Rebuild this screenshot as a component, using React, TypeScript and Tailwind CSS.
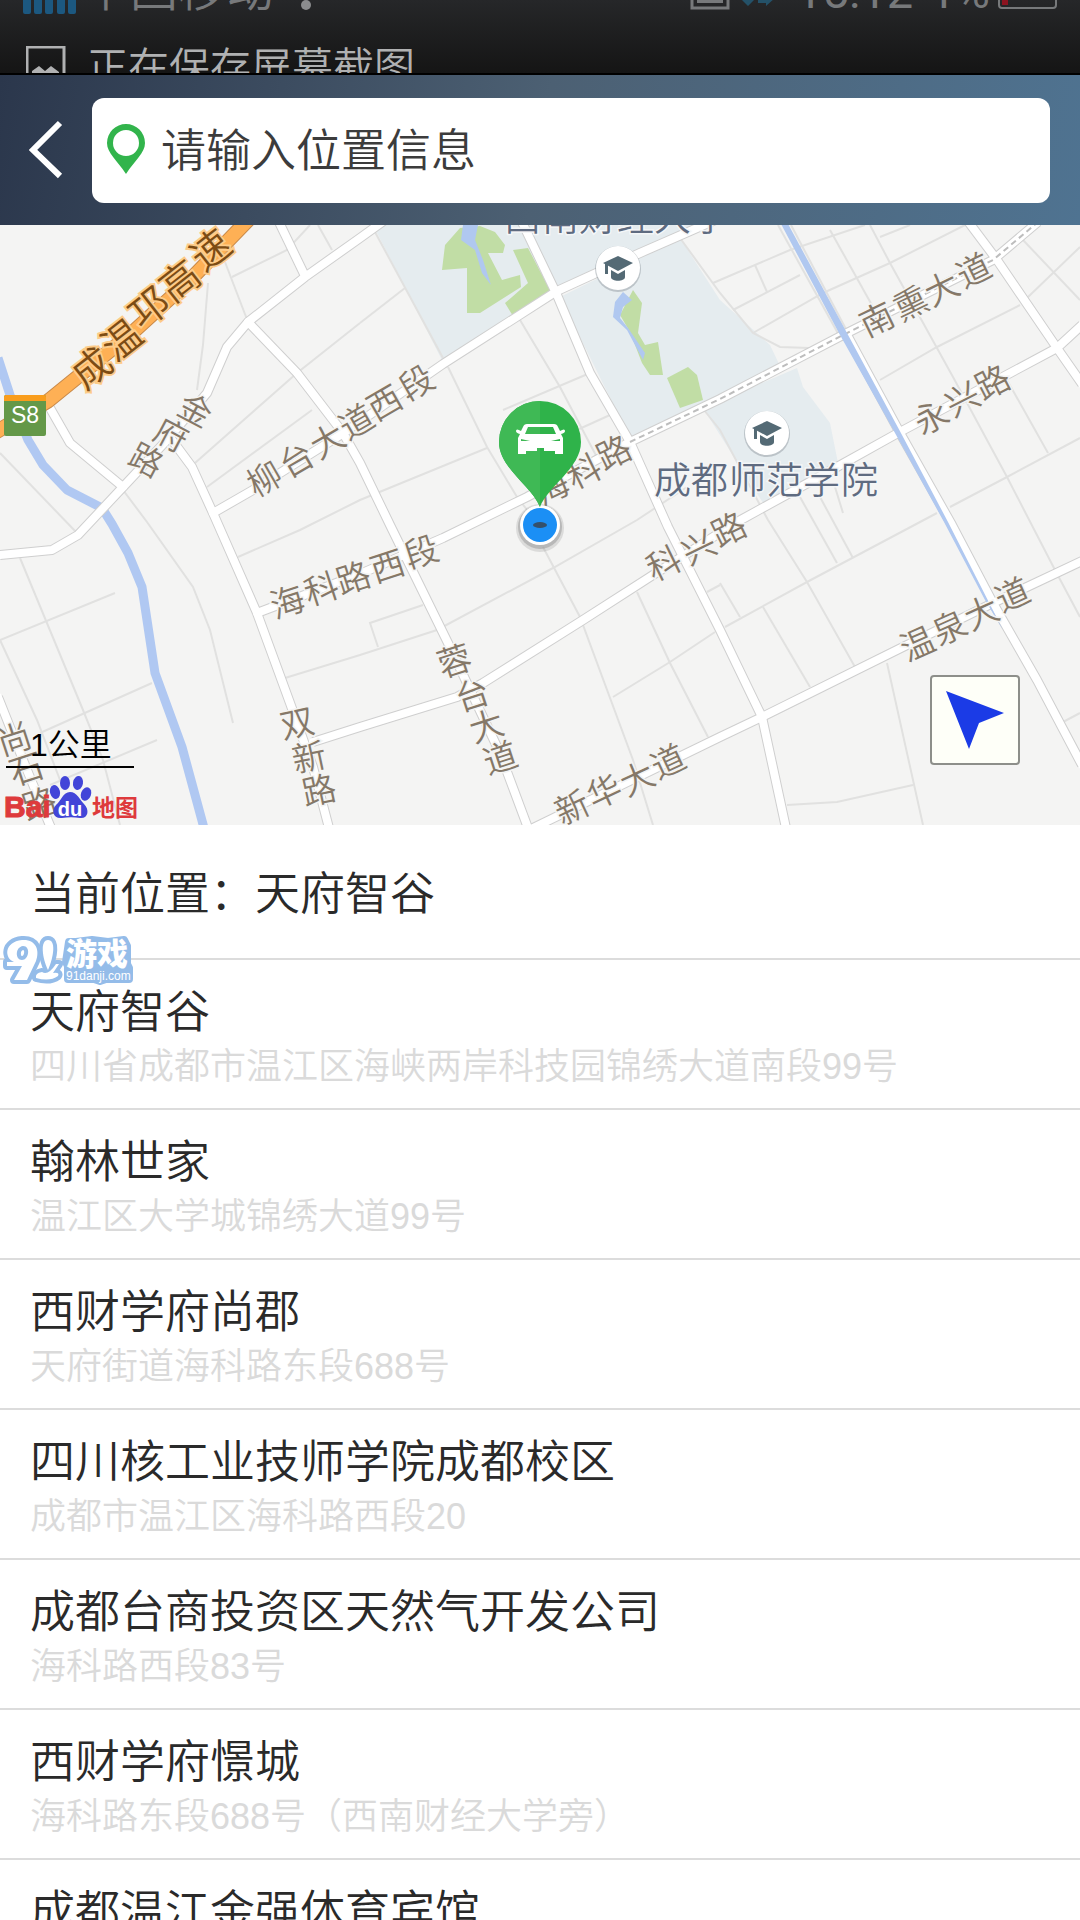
import React from "react";

const CJK = "font-['Liberation_Sans','Noto_Sans_CJK_SC',sans-serif]";

type Point = [number, number];
type RoadLabel = {
  text: string;
  angle: number;
  size: number;
  centers: Point[];
  kind: "road" | "highway" | "place";
};

const minorRoads = [
  "310,225 287,250 232,277", "225,262 248,322", "318,225 332,250", "208,283 203,345 197,390",
  "360,323 297,373 195,463", "312,410 207,487", "238,557 300,530 360,500 487,448",
  "123,490 147,522 193,587 210,630 233,723", "0,453 77,533", "20,558 83,710 103,760 120,825",
  "115,593 0,640 37,720 60,780", "152,683 40,733", "157,740 50,785",
  "285,678 360,655 437,630 553,568 637,520 687,487", "423,605 370,623 378,647",
  "543,547 580,617 633,760 653,825", "637,592 670,663 708,737", "613,697 670,662 715,632",
  "707,592 720,585", "375,232 443,358", "448,367 487,447 517,497 535,520", "360,323 405,288",
  "520,320 560,387 600,463", "503,410 590,373", "577,430 610,415",
  "680,238 720,293 753,333 780,347 810,348", "713,283 790,250 865,225", "755,265 767,292",
  "733,310 800,275", "753,333 823,293 890,263 965,225", "830,230 873,307",
  "870,225 890,263 953,377 1007,477 1055,570 1080,617", "880,237 910,225",
  "880,380 937,347 1020,305", "1027,298 1080,247", "1023,240 1080,300", "1007,380 1048,453",
  "950,507 1007,477 1080,438", "725,627 807,582 937,513", "700,405 720,430 768,520 807,582 855,667",
  "800,497 837,563", "820,497 853,558", "835,487 843,513", "720,583 740,617", "763,607 810,687",
  "887,663 923,825", "787,805 837,802 913,785", "1063,722 1080,713", "778,225 840,337", "791,225 848,333",
];

const mainRoads = [
  "213,513 253,490 345,432 443,364 557,291 640,253 720,218",
  "0,555 52,550 78,535 123,487 167,440 207,393 227,347 248,322 305,277 360,238 385,220",
  "278,220 305,276",
  "248,322 297,373 343,433 360,463 390,525 448,643 500,753 528,828",
  "50,408 70,443 123,487",
  "172,440 192,467 213,513 257,613 290,703 313,767 329,828",
  "257,613 360,574 443,538 527,497 630,442",
  "521,220 557,295 590,373 630,442 668,527 720,630 762,717 786,828",
  "313,742 360,727 457,697 483,683 583,620 653,575 737,522 837,467 898,433 1057,348 1082,325",
  "533,828 720,737 762,717 903,647 993,603 1082,561",
  "967,220 997,260 1057,348 1082,384",
  "847,335 900,433 952,525 993,603 1037,680 1082,765",
  "-2,697 27,770 51,828",
];

const dashedRoad = "630,442 720,399 843,335 993,260 1038,222";
const highway = "-4,432 48,401 133,332 190,280 250,218";
const river = "-2,358 10,395 28,440 43,465 67,490 102,508 112,524 128,553 142,587 155,673 182,747 204,828";

const campuses = [
  "373,225 443,362 555,293 521,225",
  "525,225 557,290 700,225",
  "560,297 680,238 720,300 770,345 780,366 630,438",
  "703,408 797,368 803,387 830,423 838,463 765,506 720,435",
];
const parks = [
  "460,228 445,245 442,270 467,268 467,313 480,313 521,287 520,275 502,280 488,253 503,253 505,245 495,232 480,226",
  "513,250 528,248 551,292 513,316 505,303 528,283",
  "633,290 642,303 638,333 645,345 658,342 663,375 650,375 642,363 630,332 620,315",
  "667,378 688,367 697,375 703,400 680,408",
];
const ponds = [
  "463,225 478,225 475,240 483,260 491,285 482,273 475,250 461,240",
  "623,292 632,300 623,307 620,318 628,328 645,353 643,360 627,330 613,317 615,302",
];

const labels: RoadLabel[] = [
  { text: "成温邛高速", angle: -38, size: 39, kind: "highway", centers: [[91, 367], [121, 339], [148, 307], [179, 280], [210, 249]] },
  { text: "金府路", angle: 28, size: 33, kind: "road", centers: [[195, 410], [171, 435], [146, 460]] },
  { text: "柳台大道西段", angle: -30, size: 34, kind: "road", centers: [[264, 478], [296, 459], [327, 440], [356, 421], [384, 402], [416, 382]] },
  { text: "海科路西段", angle: -18, size: 34, kind: "road", centers: [[287, 601], [321, 588], [353, 577], [387, 565], [421, 551]] },
  { text: "海科路", angle: -26, size: 34, kind: "road", centers: [[552, 487], [584, 471], [614, 452]] },
  { text: "科兴路", angle: -26, size: 34, kind: "road", centers: [[664, 563], [699, 547], [729, 529]] },
  { text: "南熏大道", angle: -26, size: 34, kind: "road", centers: [[877, 319], [911, 303], [942, 288], [974, 270]] },
  { text: "永兴路", angle: -27, size: 34, kind: "road", centers: [[931, 417], [962, 399], [992, 382]] },
  { text: "温泉大道", angle: -24, size: 34, kind: "road", centers: [[917, 643], [949, 627], [981, 612], [1012, 594]] },
  { text: "新华大道", angle: -25, size: 34, kind: "road", centers: [[572, 807], [604, 791], [637, 778], [668, 761]] },
  { text: "蓉台大道", angle: -18, size: 34, kind: "road", centers: [[454, 660], [472, 694], [486, 725], [500, 757]] },
  { text: "双新路", angle: -12, size: 34, kind: "road", centers: [[297, 723], [309, 757], [319, 790]] },
  { text: "尚石路", angle: -18, size: 34, kind: "road", centers: [[14, 738], [26, 768], [39, 803]] },
  { text: "成都师范学院", angle: 0, size: 37, kind: "place", centers: [[672, 480], [709, 480], [747, 480], [784, 480], [821, 480], [859, 480]] },
  { text: "西南财经大学", angle: 0, size: 37, kind: "place", centers: [[522, 217], [560, 217], [597, 217], [635, 217], [672, 217], [710, 217]] },
];

const labelStyles = {
  road: "fill-[#857868] stroke-[#f4f4f3] [stroke-width:3px] [paint-order:stroke]",
  highway: "fill-[#7c4c14] stroke-[#fdcb88] [stroke-width:4px] [paint-order:stroke]",
  place: "fill-[#5f6b80] stroke-[#f4f6f7] [stroke-width:3px] [paint-order:stroke]",
};

function MapLabel({ text, angle, size, centers, kind }: RoadLabel) {
  const a = (angle * Math.PI) / 180;
  const dx = -size / 2;
  const dy = size * 0.38;
  const xs = centers.map(([x]) => Math.round(x + dx * Math.cos(a) - dy * Math.sin(a)));
  const ys = centers.map(([, y]) => Math.round(y + dx * Math.sin(a) + dy * Math.cos(a)));
  return (
    <text x={xs.join(" ")} y={ys.join(" ")} rotate={angle} fontSize={size} className={labelStyles[kind]}>
      {text}
    </text>
  );
}

function SchoolBadge({ x, y }: { x: number; y: number }) {
  return (
    <g transform={`translate(${x} ${y})`}>
      <circle cy="1" r="23" fill="#8a9298" opacity="0.45" />
      <circle r="22" fill="#fff" />
      <path d="M0 -12 L15 -5 L0 3 L-15 -5 Z" fill="#546a75" />
      <path d="M-13 -4 V6 H-10 V-4 Z" fill="#546a75" />
      <path d="M-7 2 L0 6 L7 2 V9 C7 14 -7 14 -7 9 Z" fill="#546a75" />
    </g>
  );
}

function MapDrawing() {
  return (
    <svg viewBox="0 225 1080 600" role="img" aria-label="地图" className="block w-full bg-[#f4f4f3] font-[350]">
      {campuses.map((p) => <polygon key={p} points={p} fill="#e5ecef" />)}
      {parks.map((p) => <polygon key={p} points={p} fill="#c1dda5" />)}
      {ponds.map((p) => <polygon key={p} points={p} fill="#b0c8f0" />)}
      <g fill="none" stroke="#e1e1e0" strokeWidth="2">
        {minorRoads.map((p) => <polyline key={p} points={p} />)}
      </g>
      <polyline points={river} fill="none" stroke="#b0c8f2" strokeWidth="9" strokeLinejoin="round" />
      <g fill="none" stroke="#cfcfcf" strokeWidth="10" strokeLinejoin="round">
        {mainRoads.map((p) => <polyline key={p} points={p} />)}
        <polyline points={dashedRoad} />
      </g>
      <g fill="none" stroke="#fff" strokeWidth="8" strokeLinejoin="round" strokeLinecap="round">
        {mainRoads.map((p) => <polyline key={p} points={p} />)}
        <polyline points={dashedRoad} />
      </g>
      <polyline points={dashedRoad} fill="none" stroke="#bdbdbd" strokeWidth="2" strokeDasharray="6 4" />
      <path d="M780 222 L840 335 L895 433 L944 522 L985 600 L1003 630 L948 522 L902 435 L847 333 L787 222 Z" fill="#b0c8f0" />
      <polyline points={highway} fill="none" stroke="#c98a4a" strokeWidth="15" strokeLinejoin="round" />
      <polyline points={highway} fill="none" stroke="#feb055" strokeWidth="13" strokeLinejoin="round" />

      {labels.map((label) => <MapLabel key={label.text} {...label} />)}

      <rect x="4" y="395" width="42" height="41" rx="2" fill="#649848" />
      <path d="M4 401 V397 Q4 395 6 395 H44 Q46 395 46 397 V401 Z" fill="#f99d1c" />
      <text x="25" y="423" textAnchor="middle" fontSize="23" fill="#fff" className="font-normal">S8</text>

      <SchoolBadge x={618} y={268} />
      <SchoolBadge x={767} y={433} />

      <circle cx="540" cy="528" r="24" fill="#777" opacity="0.2" />
      <circle cx="540" cy="527" r="22" fill="#777" opacity="0.35" />
      <circle cx="540" cy="525" r="20" fill="#fff" />
      <circle cx="540" cy="525" r="17" fill="#1b8ff5" />
      <ellipse cx="540" cy="525" rx="7" ry="3" fill="#35506a" />
      <path d="M540 507 C532 486 499 468 499 442 A41 41 0 0 1 581 442 C581 468 548 486 540 507 Z" fill="#2fb34a" />
      <path d="M540 507 C532 486 499 468 499 442 A41 41 0 0 1 540 401 Z" fill="#3fb955" />
      <path
        fill="#fff"
        fillRule="evenodd"
        d="M527 424 H554 Q557 424 558 427 L560 431 Q565 428 565 431 Q565 433 561 434 L563 438 V454 H555 V451 H526 V454 H518 V438 L520 434 Q516 433 516 431 Q516 428 521 431 L523 427 Q524 424 527 424 Z M528 427 L525 434 H556 L553 427 Z M521 439 L530 441 H521 Z M560 439 L551 441 H560 Z M537 448 V451 H544 V448 Z"
      />
    </svg>
  );
}

function BaiduLogo() {
  return (
    <svg viewBox="0 0 134 46" role="img" aria-label="Baidu 地图" className="block h-[46px] w-[134px] overflow-visible">
      <text x="0" y="42" fontSize="30" strokeWidth="1" className="fill-[#de3a3c] stroke-[#de3a3c] font-bold">Bai</text>
      <g fill="#4245d8">
        <ellipse cx="51" cy="17" rx="5" ry="7" transform="rotate(-15 51 17)" />
        <ellipse cx="61" cy="8" rx="5" ry="7" />
        <ellipse cx="74" cy="8" rx="5" ry="7" transform="rotate(10 74 8)" />
        <ellipse cx="82" cy="19" rx="5" ry="7" transform="rotate(20 82 19)" />
        <path d="M66 17 C73 17 76 25 80 29 C86 35 84 44 76 43 C70 42 64 42 58 43 C49 44 47 35 52 30 C57 26 59 17 66 17 Z" />
      </g>
      <text x="66" y="41" textAnchor="middle" fontSize="20" fill="#fff" className="font-bold">du</text>
      <text x="88" y="41" fontSize="23" className="fill-[#de3a3c] font-bold">地图</text>
    </svg>
  );
}

const nine = "M22 6 C36 5 40 16 36 27 L27 46 H14 L22 32 H7 V28 H14 C4 24 4 8 22 6 Z M23 12 C15 13 15 26 22 26 C29 26 31 12 23 12 Z";
const bang = "M48 6 C56 6 54 22 48 36 C42 24 40 6 48 6 Z";
const swoosh = "M42 38 Q48 42 56 30 H59 L53 39 Q60 38 58 42 Q50 48 36 44 Q35 39 42 38 Z";

function Watermark() {
  return (
    <svg viewBox="0 0 134 52" role="img" aria-label="91游戏" className="block h-[52px] w-[134px]">
      <g fill="#94bce9" stroke="#94bce9" strokeWidth="8" strokeLinejoin="round">
        <path d={nine} />
        <path d={bang} />
        <path d={swoosh} />
        <path d="M69 8 H76 L92 6 L108 8 L124 6 L127 12 V30 L129 34 V45 H106 L100 47 L94 45 H68 V32 L66 28 Z" />
      </g>
      <g fill="#fff" fillRule="evenodd">
        <path d={nine} />
        <path d={bang} />
        <path d={swoosh} />
      </g>
      <text x="66" y="31" fontSize="31" fill="#fff" className="font-black">游戏</text>
      <text x="66" y="46" fontSize="12" fill="#fff">91danji.com</text>
    </svg>
  );
}

function StatusBar() {
  return (
    <div className="h-[75px] shrink-0 overflow-hidden border-b-2 border-black bg-linear-to-b from-[#262729] to-[#151515]">
      <div className="-mt-[40px] flex h-[60px] items-center justify-between pr-[22px] pl-[23px] text-[#77797b]">
        <div className="flex items-center">
          <svg viewBox="0 0 54 60" className="h-[60px] w-[54px] fill-[#1c5880]" aria-hidden="true">
            {[0, 11, 22, 34, 45].map((x) => <rect key={x} x={x} y="20" width="8" height="34" rx="2" />)}
          </svg>
          <span className="ml-[5px] text-[48px] leading-[60px]">中国移动</span>
          <svg viewBox="0 0 12 60" className="ml-[26px] h-[60px] w-[12px] fill-[#8b8c8e]" aria-hidden="true">
            <circle cx="6" cy="45" r="5" />
            <circle cx="6" cy="27" r="5" />
          </svg>
        </div>
        <div className="flex items-center font-[Roboto,sans-serif] text-[47px] leading-[60px] font-normal">
          <svg viewBox="0 0 86 60" className="mr-[20px] h-[60px] w-[86px]" aria-hidden="true">
            <path d="M2 16 H38 V48 H2 Z" fill="none" stroke="#77797b" strokeWidth="3" />
            <path d="M7 22 H33 V43 H7 Z" fill="#77797b" />
            <path d="M50 38 L58 30 L66 38 L58 46 Z M68 34 H76 V28 L85 38 L76 46 V43 H68 Z" fill="#245168" />
          </svg>
          <span className="mt-1">15:12</span>
          <span className="mt-1 ml-4">1%</span>
          <svg viewBox="0 0 60 60" className="ml-[8px] h-[60px] w-[60px]" aria-hidden="true">
            <rect x="1" y="20" width="57" height="28" rx="3" fill="none" stroke="#77797b" strokeWidth="2" />
            <rect x="4" y="23" width="6" height="22" fill="#8c1420" />
          </svg>
        </div>
      </div>
      <div className="mt-[16px] flex h-[60px] items-center pl-[26px] text-[#b0b1b2]">
        <svg viewBox="0 0 40 40" className="h-[40px] w-[40px]" aria-hidden="true">
          <path d="M1 1 H38 V38 H1 Z" fill="none" stroke="#b0b1b2" strokeWidth="3" />
          <path d="M6 32 V25 L13 20 L19 25 L25 20 L33 26 V32 Z" fill="#b0b1b2" />
        </svg>
        <span className="mt-1 ml-[21px] text-[41px] leading-[60px]">正在保存屏幕截图</span>
      </div>
    </div>
  );
}

function SearchHeader() {
  return (
    <header className="flex h-[150px] shrink-0 items-center bg-linear-[100deg] from-[#2b374c] via-[#4c6073] to-[#4f7391] pr-[30px]">
      <button type="button" aria-label="返回" className="flex h-full w-[92px] shrink-0 items-center justify-center">
        <svg viewBox="0 0 34 60" className="h-[60px] w-[34px]" aria-hidden="true">
          <path d="M31 3 L4 30 L31 56" fill="none" stroke="#fff" strokeWidth="6" />
        </svg>
      </button>
      <label className="flex h-[105px] min-w-0 flex-1 items-center rounded-xl bg-white pl-[14px]">
        <svg viewBox="0 0 40 52" className="h-[52px] w-[40px] shrink-0" aria-hidden="true">
          <path fillRule="evenodd" fill="#32b44c" d="M20 0 A19 19 0 0 1 39 19 C39 29 29 36 20 50 C11 36 1 29 1 19 A19 19 0 0 1 20 0 Z M20 6 A13 13 0 1 0 20 32 A13 13 0 1 0 20 6 Z" />
        </svg>
        <input
          type="text"
          aria-label="位置信息"
          placeholder="请输入位置信息"
          className="ml-[15px] h-full min-w-0 flex-1 bg-transparent pt-1 text-[45px] font-[350] text-[#333] outline-none placeholder:text-[#3c3c3c]"
        />
      </label>
    </header>
  );
}

const places = [
  { name: "天府智谷", address: "四川省成都市温江区海峡两岸科技园锦绣大道南段99号" },
  { name: "翰林世家", address: "温江区大学城锦绣大道99号" },
  { name: "西财学府尚郡", address: "天府街道海科路东段688号" },
  { name: "四川核工业技师学院成都校区", address: "成都市温江区海科路西段20" },
  { name: "成都台商投资区天然气开发公司", address: "海科路西段83号" },
  { name: "西财学府憬城", address: "海科路东段688号（西南财经大学旁）" },
  { name: "成都温江金强体育宾馆", address: "" },
];

export default function App() {
  return (
    <div className={`flex h-screen flex-col overflow-hidden bg-white font-[350] ${CJK}`}>
      <StatusBar />
      <SearchHeader />
      <section className="relative shrink-0">
        <MapDrawing />
        <div className="absolute bottom-[4px] left-[4px]">
          <div className="mb-[7px] ml-[2px] w-[128px] border-b-2 border-black pt-[2px] pl-6 text-[32px] leading-[42px] text-black">1公里</div>
          <BaiduLogo />
        </div>
        <button
          type="button"
          aria-label="定位"
          className="absolute right-[60px] bottom-[60px] size-[90px] rounded border-2 border-[#8d8f8a] bg-[#fefff8]"
        >
          <svg viewBox="0 0 86 86" aria-hidden="true">
            <path d="M14 14 L72 36 L47 46 L37 72 Z" fill="#1b3be6" />
          </svg>
        </button>
      </section>
      <main className="relative min-h-0 flex-1 overflow-hidden text-[#2a2a2a]">
        <h1 className="border-b-2 border-[#dcdcdc] px-[30px] pt-[40px] pb-[33px] text-[45px] leading-[60px] font-[350]">当前位置：天府智谷</h1>
        <div className="pointer-events-none absolute top-[109px] left-0">
          <Watermark />
        </div>
        <ul>
          {places.map((place) => (
            <li key={place.name} className="border-b-2 border-[#dcdcdc]">
              <button type="button" className="block w-full px-[30px] pt-[26px] pb-[14px] text-left">
                <span className="block truncate text-[45px] leading-[54px]">{place.name}</span>
                <span className="block min-h-[54px] truncate text-[36px] leading-[54px] text-[#dadada]">{place.address}</span>
              </button>
            </li>
          ))}
        </ul>
      </main>
    </div>
  );
}
